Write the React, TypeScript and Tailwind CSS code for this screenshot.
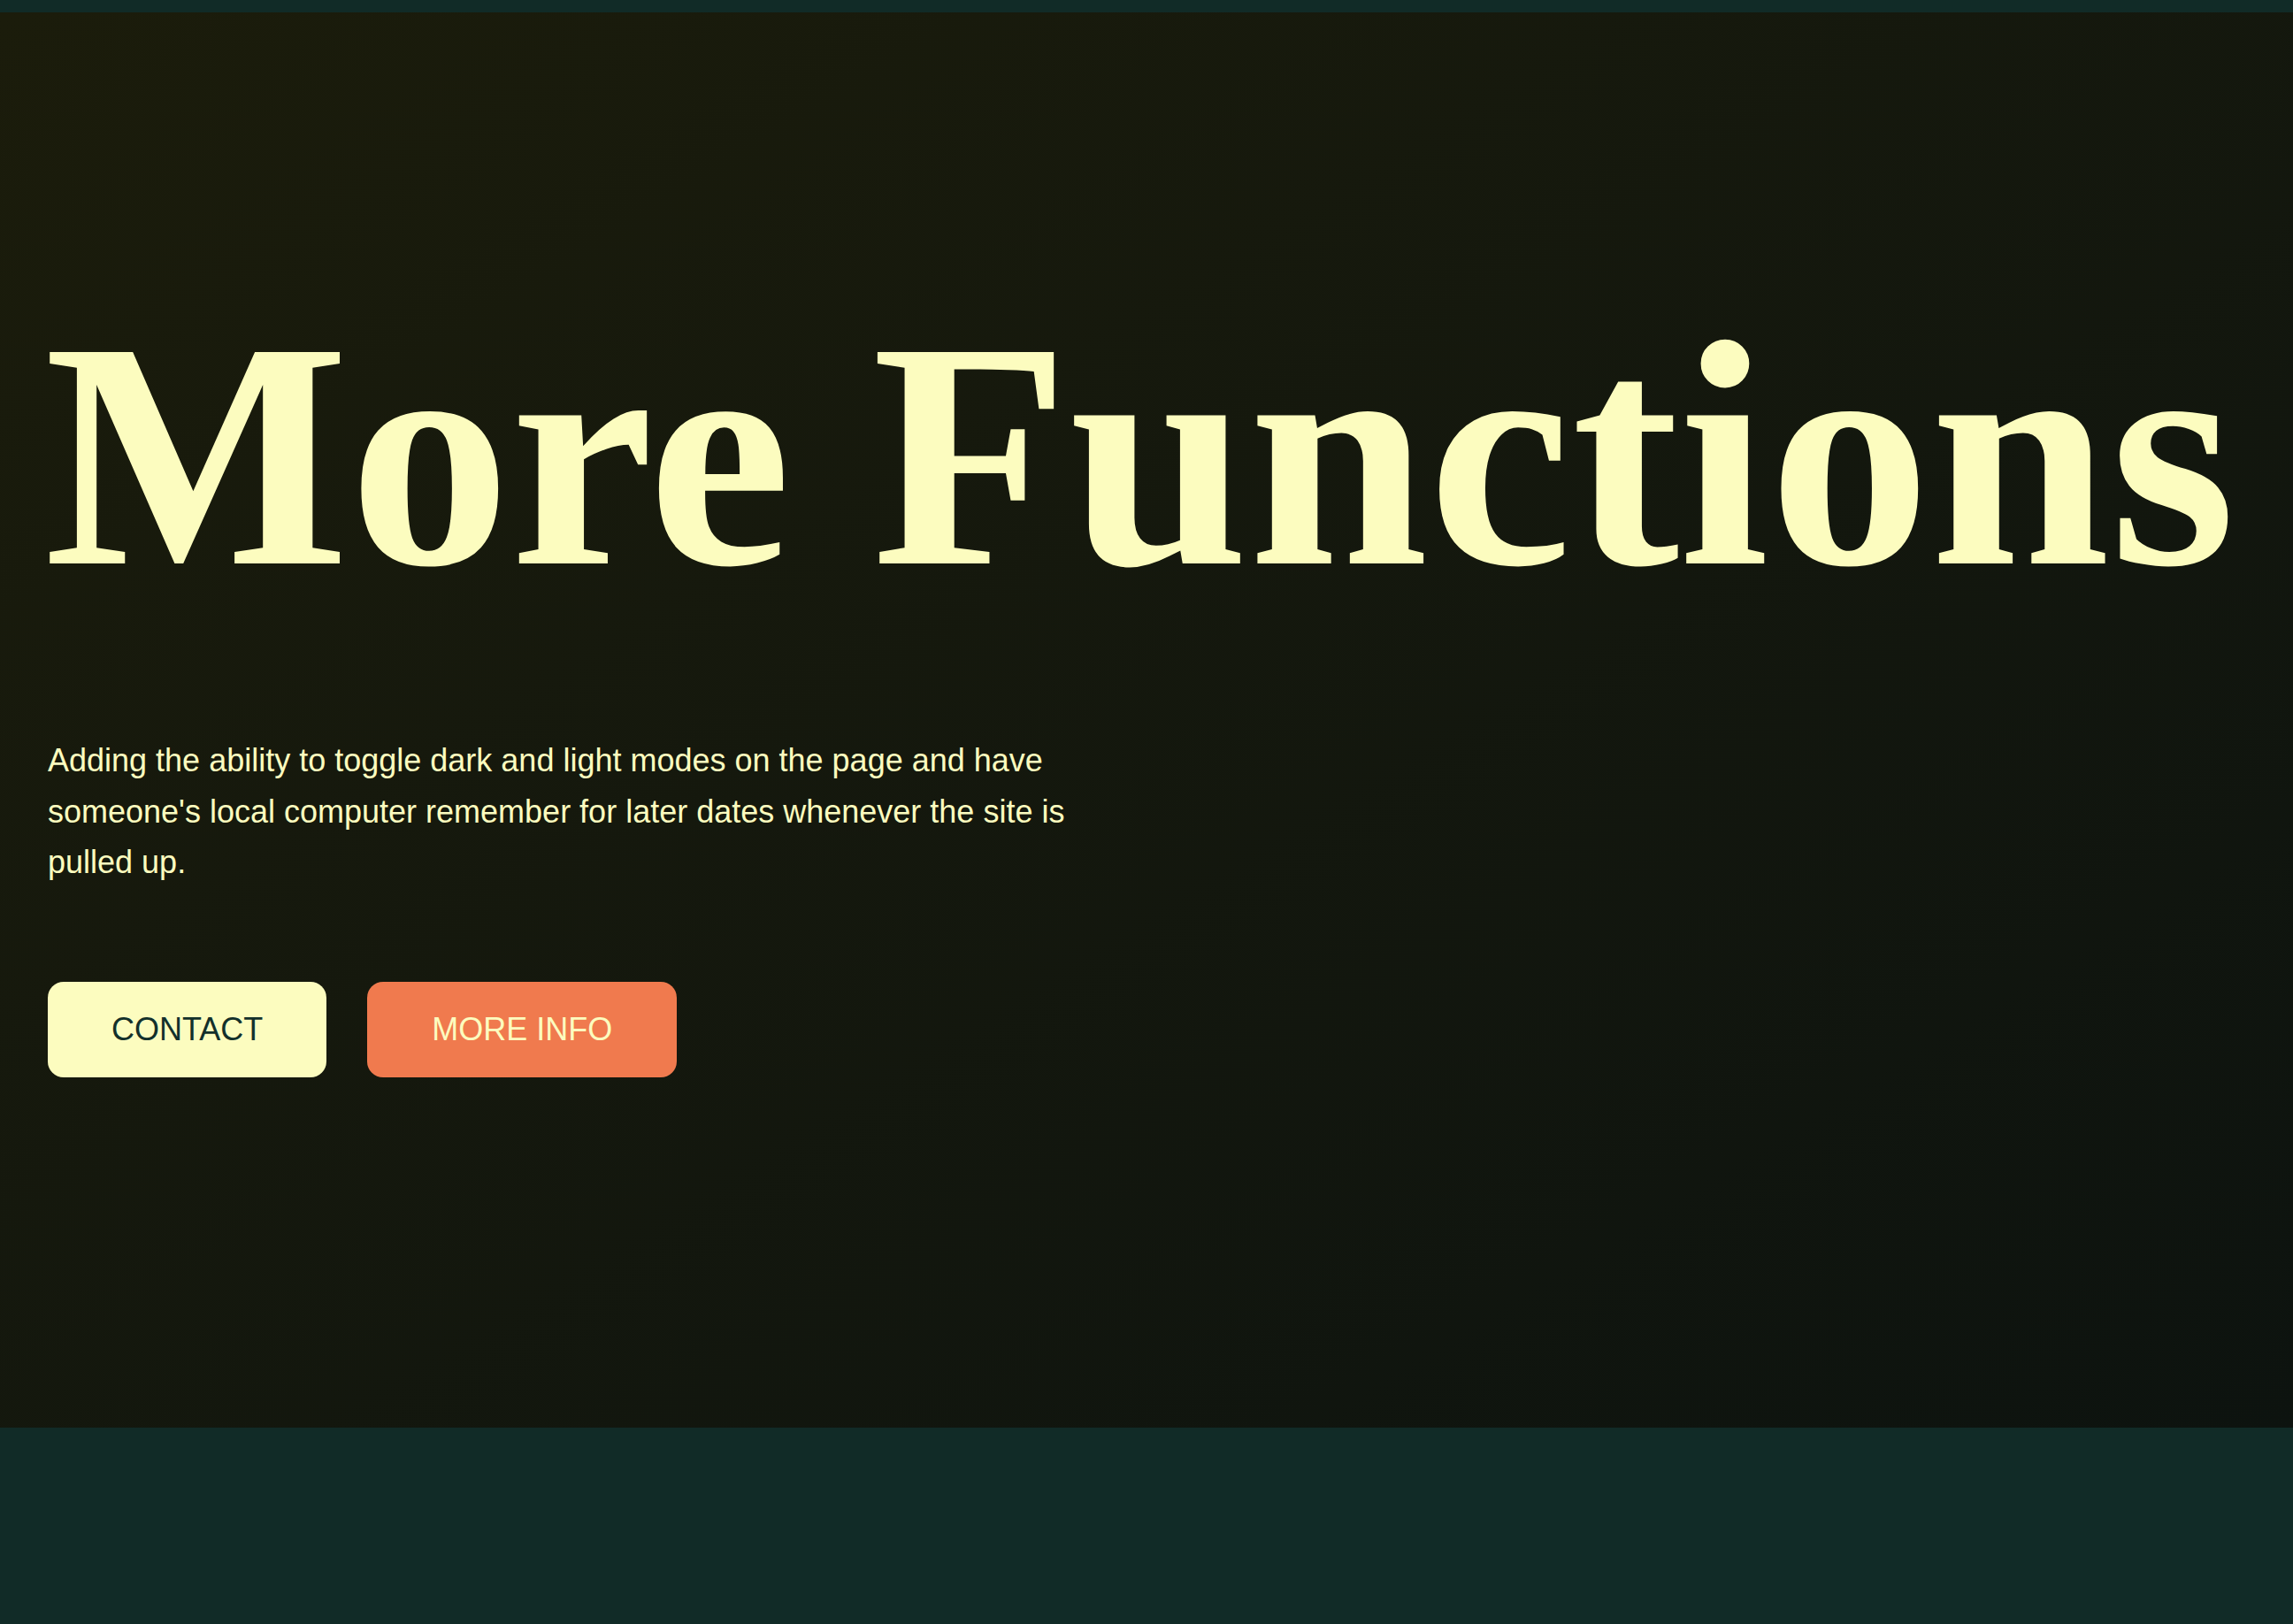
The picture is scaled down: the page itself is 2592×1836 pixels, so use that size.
import React from 'react';

export default function App() {
  return (
    <div className="min-h-screen bg-[#112b27] pt-[14px]">
      {/* Hero */}
      <section className="h-[1600px] bg-gradient-to-br from-[#1b1c0b] to-[#0d130f] px-[54px] pt-[318px]">
        <h1 className="font-['Liberation_Serif','Times_New_Roman',serif] text-[365px] font-bold leading-none text-[#fcfcbf] whitespace-nowrap -ml-[4px]">
          More Functions
        </h1>

        <p className="mt-[134px] w-[1215px] font-['Liberation_Sans',Arial,sans-serif] text-[36px] leading-[1.6] text-[#fcfcbf]">
          Adding the ability to toggle dark and light modes on the page and have someone's local computer
          remember for later dates whenever the site is pulled up.
        </p>

        <div className="mt-[106px] flex gap-[46px] font-['Liberation_Sans',Arial,sans-serif]">
          <button className="h-[108px] rounded-[18px] bg-[#fcfcbf] px-[72px] text-[36px] text-[#13302b]">
            CONTACT
          </button>
          <button className="h-[108px] rounded-[18px] bg-[#f07a4e] px-[73px] text-[36px] text-[#fcfcbf]">
            MORE INFO
          </button>
        </div>
      </section>
    </div>
  );
}
